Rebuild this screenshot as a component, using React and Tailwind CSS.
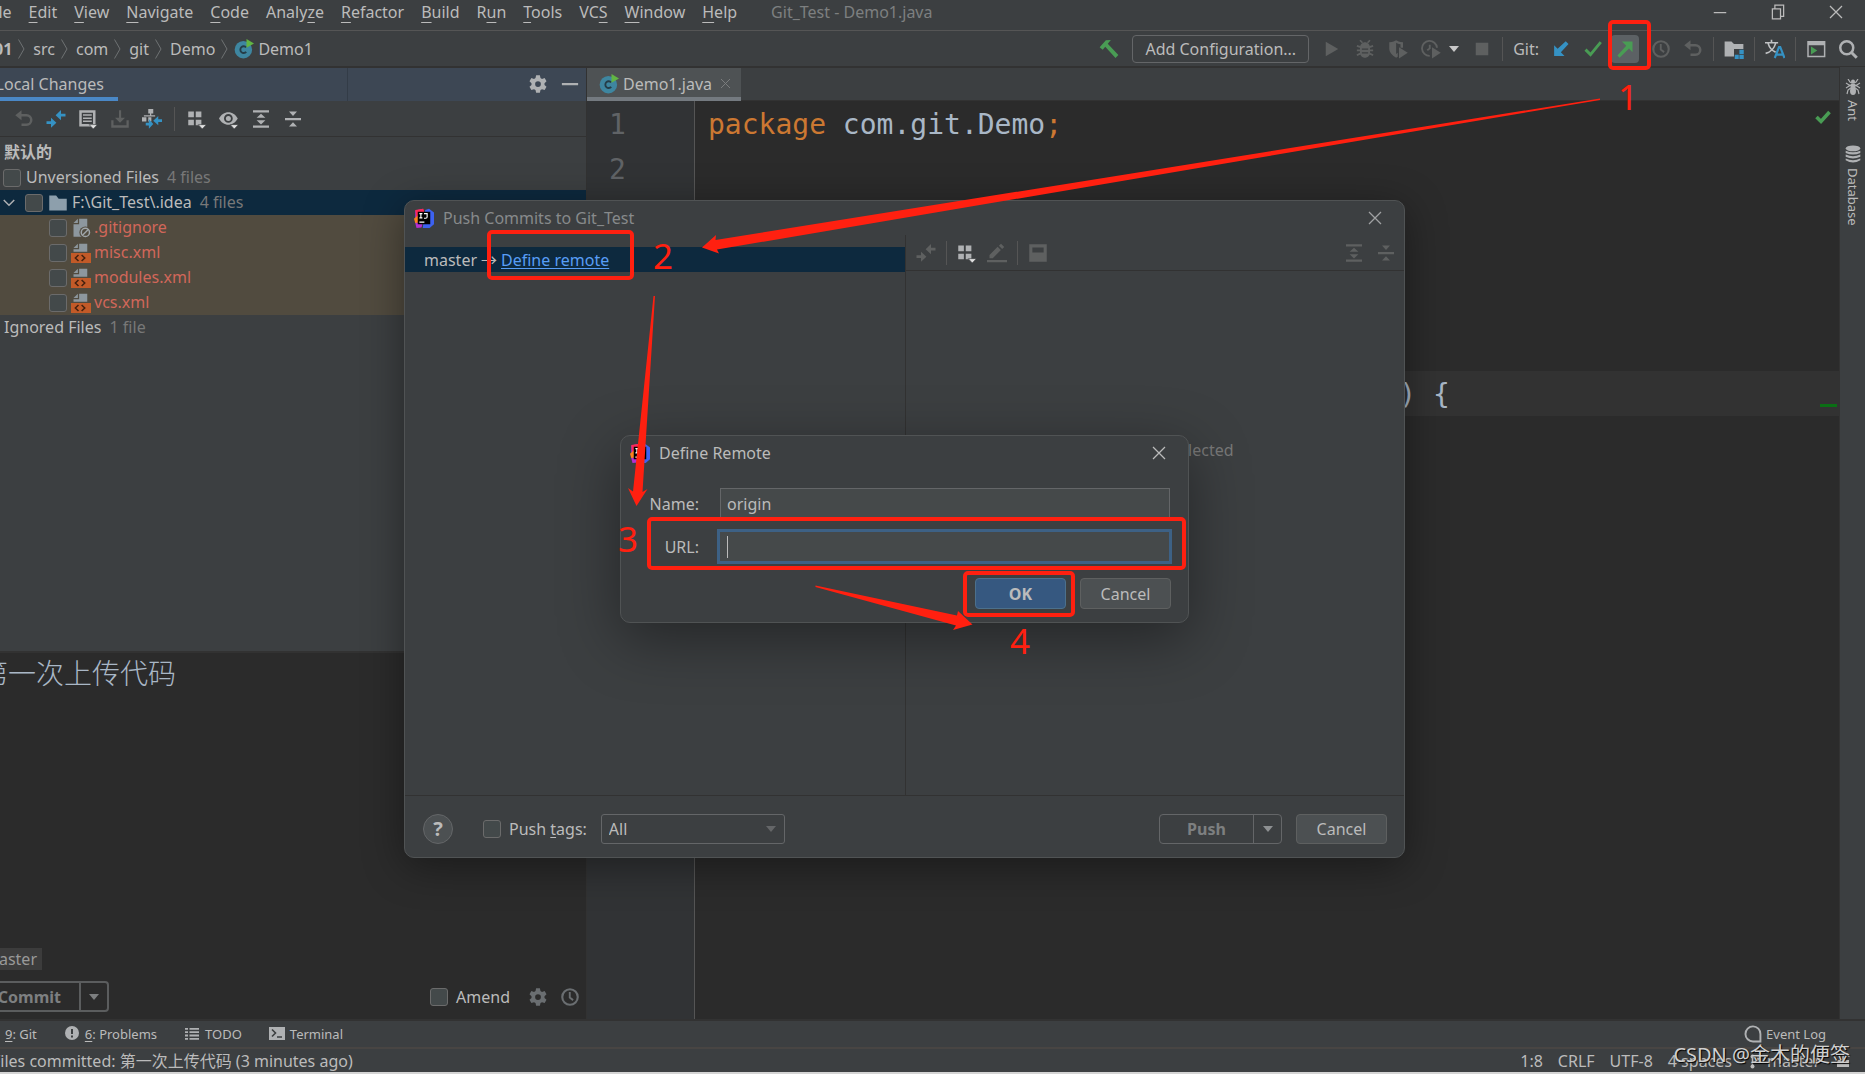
import clsx from 'clsx';

function Icon({ className, size = 'w-5 h-5', children, ...rest }) {
  return (
    <svg
      viewBox="0 0 16 16"
      aria-hidden="true"
      className={clsx('shrink-0', size, className)}
      fill="currentColor"
      {...rest}
    >
      {children}
    </svg>
  );
}

const UndoIcon = () => (
  <Icon>
    <path d="M1 5l5-4v3h4a4.600 4.600 0 0 1 0 9.600H6v-2h4a2.600 2.600 0 0 0 0-5.600H6v3z" />
  </Icon>
);

const DiffIcon = () => (
  <Icon>
    <path d="M7.700 4.900L12 .8v2.900h3.600v2.200H12v3zM8.300 10.900L4 15v-3H.4V9.800H4V6.900z" />
  </Icon>
);

const GridIcon = () => (
  <Icon>
    <path d="M1 2h4.500v4.500H1zM7 2h4.500v4.500H7zM1 8.500h4.500V13H1zM7 8.500h4.500V13H7z" />
    <path d="M9 12.500h6.500L12.200 16z" fill="#e0e0e0" stroke="#3c3f41" strokeWidth=".5" />
  </Icon>
);

const ExpandIcon = () => (
  <Icon>
    <path d="M1.600 1h12.800v1.800H1.600zM1.600 13.200h12.800V15H1.600zM8 3.700l3.500 3.300h-7zM8 12.300L4.500 9h7z" />
  </Icon>
);

const CollapseIcon = () => (
  <Icon>
    <path d="M1.600 7.100h12.800v1.800H1.600zM8 5.500L4.800 2h6.400zM8 10.500l3.200 3.500H4.800z" />
  </Icon>
);

const GearIcon = () => (
  <Icon>
    <path
      fillRule="evenodd"
      d="M6.500 1h3l.5 2.200 1.200.7 2.100-.7 1.500 2.600-1.600 1.500v1.400l1.600 1.500-1.500 2.600-2.100-.7-1.200.7-.5 2.200h-3l-.5-2.200-1.200-.7-2.100.7-1.500-2.600 1.600-1.500V7.300L1.200 5.800l1.500-2.600 2.100.7L6 3.200zM8 5.700a2.300 2.300 0 1 0 0 4.600 2.300 2.300 0 0 0 0-4.600z"
    />
  </Icon>
);

const ClockIcon = () => (
  <Icon>
    <circle cx="8" cy="8" r="6.200" fill="none" stroke="currentColor" strokeWidth="1.700" />
    <path d="M7.800 4v4.500l2.700 2" fill="none" stroke="currentColor" strokeWidth="1.500" />
  </Icon>
);

const CloseIcon = ({ size }) => (
  <Icon size={size}>
    <path d="M3.200 3.200l9.600 9.600M12.800 3.200l-9.600 9.600" stroke="currentColor" strokeWidth="1" />
  </Icon>
);

const ClassIcon = () => (
  <Icon>
    <circle cx="7.500" cy="8.500" r="7" fill="#3e86a0" />
    <path d="M9.800 6.700a2.700 2.700 0 1 0 0 3.600" fill="none" stroke="#253d47" strokeWidth="1.500" />
    <path d="M10 0l6 3.500L10 7z" fill="#62b543" />
  </Icon>
);

const IdeaIcon = () => (
  <Icon>
    <path d="M1 2l6-1.500L8 8l-2 7.500-4 .5-1-4z" fill="#b52fd0" />
    <path d="M1 1.500L7.500.5 9 6 2 8z" fill="#fe2857" />
    <path d="M0 8.500L3 6l1 5.500-3 .5z" fill="#fc801d" />
    <path d="M9 1.500L12 .5l4 3v9.500l-3.500 3H7L8 8z" fill="#3d62f0" />
    <path d="M3 3h10v10H3z" fill="#000" />
    <path d="M4.300 4.500h2.400M5.500 4.500v3.400M4.300 7.900h2.400M8 4.500h2.500v2.700q0 1-1.200 1H8M4.300 11.300h4" fill="none" stroke="#fff" strokeWidth=".9" />
  </Icon>
);

const FileIcon = ({ ignored }) => (
  <Icon>
    <path d="M6.500.5H13V15H2V5h4.500z" fill="#8d979e" />
    <path d="M5.500.5V4H2z" fill="#8d979e" />
    {ignored ? (
      <>
        <circle cx="11.500" cy="11.500" r="4.800" fill="#514b3f" />
        <circle cx="11.500" cy="11.500" r="3.300" fill="none" stroke="#a0a6aa" strokeWidth="1.200" />
        <path d="M9.200 13.800l4.600-4.600" stroke="#a0a6aa" strokeWidth="1.200" />
      </>
    ) : (
      <>
        <path d="M0 7h16v1H0z" fill="#514b3f" />
        <path d="M0 8h16v8H0z" fill="#c25a28" />
        <path d="M6 9.600L3.500 12 6 14.400M8.500 9.600L11 12l-2.500 2.400" fill="none" stroke="#43210f" strokeWidth="1.200" />
      </>
    )}
  </Icon>
);

const Caret = ({ className }) => (
  <svg viewBox="0 0 10 6" aria-hidden="true" className={clsx('w-[10px] h-[6px] shrink-0', className)} fill="currentColor">
    <path d="M0 0h10L5 6z" />
  </svg>
);

const Sep = () => <div className="w-px h-6 bg-[#555555]" />;

function IconButton({ label, className, children }) {
  return (
    <button aria-label={label} className={clsx('shrink-0', className)}>
      {children}
    </button>
  );
}

function Checkbox({ id }) {
  return (
    <input
      type="checkbox"
      id={id}
      className="appearance-none w-[18px] h-[18px] shrink-0 rounded-[3px] border border-[#6b6b6b] bg-[#43494a]"
    />
  );
}

const MENU = [
  ['', 'F', 'ile'],
  ['', 'E', 'dit'],
  ['', 'V', 'iew'],
  ['', 'N', 'avigate'],
  ['', 'C', 'ode'],
  ['Analy', 'z', 'e'],
  ['', 'R', 'efactor'],
  ['', 'B', 'uild'],
  ['R', 'u', 'n'],
  ['', 'T', 'ools'],
  ['VC', 'S', ''],
  ['', 'W', 'indow'],
  ['', 'H', 'elp'],
];

function MenuBar() {
  return (
    <header className="h-[31px] pb-[6px] shrink-0 flex items-center border-b border-[#555555]">
      <nav className="-ml-[14px] flex gap-[17px]">
        {MENU.map(([before, key, after]) => (
          <button key={before + key + after}>
            {before}
            <span className="underline underline-offset-4">{key}</span>
            {after}
          </button>
        ))}
      </nav>
      <span className="ml-[34px] text-[#7d7f80]">Git_Test - Demo1.java</span>
      <div className="ml-auto pr-[19px] flex items-center gap-[38px]">
        <IconButton label="Minimize">
          <Icon>
            <path d="M3 8h10v1H3z" />
          </Icon>
        </IconButton>
        <IconButton label="Restore">
          <Icon>
            <path d="M3.500 5.500h6.500v8H3.500zM5.500 5.500v-3H12.500v9H10" fill="none" stroke="currentColor" />
          </Icon>
        </IconButton>
        <IconButton label="Close">
          <CloseIcon />
        </IconButton>
      </div>
    </header>
  );
}

const Chevron = () => (
  <svg viewBox="0 0 7 20" aria-hidden="true" className="w-[7px] h-5" fill="none" stroke="#6f7274">
    <path d="M.5.500L6 10 .5 19.500" />
  </svg>
);

function Toolbar() {
  return (
    <div className="h-[36px] shrink-0 flex items-center pr-[7px] border-b border-[#323232]">
      <div className="-ml-[6px] flex items-center gap-[6px]">
        <span className="font-bold">01</span>
        {['src', 'com', 'git', 'Demo'].map((part) => (
          <span key={part} className="flex items-center gap-2">
            <Chevron />
            {part}
          </span>
        ))}
        <Chevron />
        <span className="flex items-center gap-1">
          <ClassIcon />
          Demo1
        </span>
      </div>

      <div className="ml-auto flex items-center gap-[10px]">
        <div className="flex items-center gap-[13px] text-[#5e6060]">
          <IconButton label="Build" className="text-[#499c54]">
            <Icon>
              <path d="M.5 6.500L5.500 1 9.500.8 7 3.700 15.500 12.800 13.200 15.200 5 6.200 3 8.600z" />
            </Icon>
          </IconButton>
          <button className="h-7 px-3 rounded-[4px] border border-[#646668] text-[#bbbbbb]">
            Add Configuration...
          </button>
          <IconButton label="Run">
            <Icon>
              <path d="M3 2.200l10 5.800L3 13.800z" />
            </Icon>
          </IconButton>
          <IconButton label="Debug">
            <Icon>
              <path d="M4 1l2 2M12 1l-2 2M1.500 5.500l3 1M14.500 5.500l-3 1M1.500 9h3M14.500 9h-3M1.500 13l3-1.500M14.500 13l-3-1.500" stroke="currentColor" strokeWidth="1.400" />
              <path fillRule="evenodd" d="M8 2.500c2.200 0 4 2 4 4V11c0 2.200-1.800 4-4 4s-4-1.800-4-4V6.500c0-2 1.800-4 4-4zM5.500 7.500v1h5v-1zm0 3v1h5v-1z" />
            </Icon>
          </IconButton>
          <IconButton label="Run with coverage">
            <Icon>
              <path fillRule="evenodd" d="M1 2.500C4 2.500 5.500 1.500 6.500 1c1 .5 2.500 1.500 5.500 1.500V7h-2V4.200C8.500 4 7.500 3.500 6.500 3v9l1.300-1v3.200L6.500 15C3 13 1 10.500 1 8z" />
              <path d="M8.800 6.500l7 4.500-7 4.500z" />
            </Icon>
          </IconButton>
          <div className="flex items-center gap-2">
            <IconButton label="Profile">
              <Icon>
                <path d="M7 13.500A6 6 0 1 1 12.800 7M7 4.500v3L5 9" fill="none" stroke="currentColor" strokeWidth="1.500" />
                <path d="M8.800 6.500l7 4.500-7 4.500z" />
              </Icon>
            </IconButton>
            <Caret className="text-[#c8c8c8]" />
          </div>
          <IconButton label="Stop">
            <Icon>
              <path d="M3 3h10v10H3z" />
            </Icon>
          </IconButton>
        </div>
        <Sep />
        <div className="flex items-center gap-3">
          <span>Git:</span>
          <IconButton label="Update project" className="text-[#3592c4]">
            <Icon>
              <path d="M2.500 13.500V5L5.300 7.700 11.800 1.800 14 4 7.900 10.600l2.900 2.900z" />
            </Icon>
          </IconButton>
          <IconButton label="Commit" className="text-[#499c54]">
            <Icon>
              <path d="M2 8.500l4 4 8.200-10" fill="none" stroke="currentColor" strokeWidth="2.300" />
            </Icon>
          </IconButton>
          <IconButton
            label="Push"
            className="-ml-1 w-7 h-7 flex items-center justify-center rounded-[4px] bg-[#5c6164] text-[#499c54]"
          >
            <Icon>
              <path d="M14 2v8.500L11.200 7.500 3.700 15 1.900 13.200 9 5.300 5.500 2z" />
            </Icon>
          </IconButton>
          <IconButton label="History" className="text-[#5e6060]">
            <ClockIcon />
          </IconButton>
          <IconButton label="Rollback" className="text-[#5e6060]">
            <UndoIcon />
          </IconButton>
        </div>
        <Sep />
        <IconButton label="Project structure" className="text-[#afb1b3]">
          <Icon>
            <path d="M.5 2h5.500l2 2h7.500v4H8v6H.5z" />
            <path d="M12.300 8.500h3.500V12h-3.500zM8.600 12.500h3.200V16H8.600zM12.300 12.500h3.500V16h-3.500z" fill="#3592c4" />
          </Icon>
        </IconButton>
        <Sep />
        <IconButton label="Translate" className="text-[#c0c2c4]">
          <Icon>
            <path d="M0 3h10.500M5.200.5V3M2.500 3.500c1 3.500 3.500 6 6 7M8.500 3.500c-1 3.500-4 7-8 8" fill="none" stroke="currentColor" strokeWidth="1.300" />
            <path d="M7.800 15.200L11.200 6.500h1l3.400 8.700M9 12.500h5.500" fill="none" stroke="#3592c4" strokeWidth="1.700" />
          </Icon>
        </IconButton>
        <Sep />
        <div className="flex items-center gap-3 text-[#afb1b3]">
          <IconButton label="Run anything">
            <Icon>
              <path fillRule="evenodd" d="M1 1.500h14.500v13H1zM2.200 5v8.300h12.100V5z" />
              <path d="M4 6l5 3.200L4 12.400z" fill="#499c54" />
            </Icon>
          </IconButton>
          <IconButton label="Search everywhere">
            <Icon>
              <path d="M11 11l4 4" stroke="currentColor" strokeWidth="2.400" />
              <circle cx="7" cy="7" r="5.200" fill="none" stroke="currentColor" strokeWidth="2" />
            </Icon>
          </IconButton>
        </div>
      </div>
    </div>
  );
}

const FILES = ['.gitignore', 'misc.xml', 'modules.xml', 'vcs.xml'];

function ChangesTree() {
  return (
    <div className="flex-1 min-h-0 pt-[3px] border-t border-[#323232] leading-[25px]">
      <div className="h-[25px] pl-1 font-bold">默认的</div>
      <div className="h-[25px] pl-[3px] flex items-center">
        <Checkbox id="unversioned" />
        <label htmlFor="unversioned" className="ml-[5px]">
          Unversioned Files
        </label>
        <span className="ml-2 text-[#787878]">4 files</span>
      </div>
      <div className="h-[25px] pl-[3px] flex items-center bg-[#0d293e]">
        <Icon size="w-3 h-3" className="mr-[10px]">
          <path d="M1 4l7 7 7-7" fill="none" stroke="#afb1b3" strokeWidth="2" />
        </Icon>
        <Checkbox id="idea" />
        <Icon className="ml-[5px]">
          <path d="M1 2h5.500l2 2.500H15V14H1z" fill="#8d9fac" />
        </Icon>
        <label htmlFor="idea" className="ml-1">
          F:\Git_Test\.idea
        </label>
        <span className="ml-2 text-[#787878]">4 files</span>
      </div>
      {FILES.map((name) => (
        <div key={name} className="h-[25px] pl-[49px] flex items-center bg-[#514b3f]">
          <Checkbox id={name} />
          <span className="ml-1">
            <FileIcon ignored={name === '.gitignore'} />
          </span>
          <label htmlFor={name} className="ml-[3px] text-[#d1675a]">
            {name}
          </label>
        </div>
      ))}
      <div className="h-[25px] pl-1">
        Ignored Files <span className="ml-1 text-[#787878]">1 file</span>
      </div>
    </div>
  );
}

function CommitPanel() {
  return (
    <section className="w-[587px] shrink-0 flex flex-col overflow-hidden border-r border-[#323232]">
      <div className="h-[34px] shrink-0 flex border-t border-[#323232] bg-[#3d4754]">
        <div className="w-[348px] border-r border-[#333c47] flex">
          <div className="w-[118px] pr-[14px] pt-[2px] flex items-center justify-end border-b-4 border-[#4a88c7] whitespace-nowrap">
            Local Changes
          </div>
        </div>
        <div className="ml-auto pr-[6px] pb-[2px] flex items-center gap-3 text-[#afb1b3]">
          <IconButton label="Settings">
            <GearIcon />
          </IconButton>
          <IconButton label="Hide">
            <Icon>
              <path d="M1.500 7.200h13v1.800h-13z" />
            </Icon>
          </IconButton>
        </div>
      </div>

      <div className="h-[35px] shrink-0 pl-[14px] flex items-center gap-3 text-[#afb1b3]">
        <IconButton label="Rollback" className="text-[#5e6060]">
          <UndoIcon />
        </IconButton>
        <IconButton label="Show diff" className="text-[#3592c4]">
          <DiffIcon />
        </IconButton>
        <IconButton label="Changelists">
          <Icon>
            <path fillRule="evenodd" d="M1 1h13v13H1zM3 3v9h9V3z" />
            <path d="M4 4.200h7v1.200H4zM4 6.700h7v1.200H4zM4 9.200h7v1.200H4z" />
            <path d="M9 12.500h6.500L12.200 16z" fill="#e0e0e0" stroke="#3c3f41" strokeWidth=".5" />
          </Icon>
        </IconButton>
        <IconButton label="Shelve" className="text-[#5e6060]">
          <Icon>
            <path d="M7.200 1h1.700v6H12l-4 4-4-4h3.200zM1 9h1.800v4h10.400V9H15v6H1z" />
          </Icon>
        </IconButton>
        <IconButton label="Group by changelist">
          <Icon>
            <path d="M5 0h4v3.500H5zM6.400 3h1v3h-1zM1.500 5h9v1h-9zM0 6.500h3.500V10H0zM5 6.500h2.500V10H5z" />
            <path d="M9 9.300l4-3.800v2.600h3v2.200h-3V13zM9 12l-3.500 3.800v-2.600H3V11h2.500V8z" fill="#3592c4" />
          </Icon>
        </IconButton>
        <Sep />
        <IconButton label="Group by">
          <GridIcon />
        </IconButton>
        <IconButton label="View options">
          <Icon>
            <path fillRule="evenodd" d="M0 7.500C1.500 4.500 4.500 2.500 7.500 2.500s6 2 7.500 5c-1.500 3-4.500 5-7.500 5s-6-2-7.500-5zM7.500 4a3.500 3.500 0 1 0 0 7 3.500 3.500 0 0 0 0-7z" />
            <circle cx="7.500" cy="7.500" r="2" />
            <path d="M9 12.500h6.500L12.200 16z" fill="#e0e0e0" stroke="#3c3f41" strokeWidth=".5" />
          </Icon>
        </IconButton>
        <IconButton label="Expand all">
          <ExpandIcon />
        </IconButton>
        <IconButton label="Collapse all">
          <CollapseIcon />
        </IconButton>
      </div>

      <ChangesTree />

      <div className="h-[368px] shrink-0 flex flex-col bg-[#2b2b2b] border-t-2 border-[#323232]">
        <p className="-ml-5 text-[28px] leading-10 font-light text-[#a9b7c6]">第一次上传代码</p>
        <div className="mt-auto w-[42px] h-[22px] pr-[5px] flex items-center justify-end bg-[#3c3c3c] text-[#999999]">
          master
        </div>
        <div className="mt-[11px] mb-[7px] flex items-center pr-[6px]">
          <div className="-ml-5 w-[129px] h-[31px] flex rounded-[4px] border-2 border-[#5b5d5e] text-[#7d7f80]">
            <button className="flex-1 pr-[18px] text-right font-bold">Commit</button>
            <button aria-label="Commit options" className="w-[28px] flex items-center justify-center border-l-2 border-[#5b5d5e]">
              <Caret />
            </button>
          </div>
          <div className="ml-auto flex items-center">
            <Checkbox id="amend" />
            <label htmlFor="amend" className="ml-2 mr-[18px]">
              Amend
            </label>
            <div className="flex items-center gap-3 text-[#6a6e71]">
              <IconButton label="Commit settings">
                <GearIcon />
              </IconButton>
              <IconButton label="Commit history">
                <ClockIcon />
              </IconButton>
            </div>
          </div>
        </div>
      </div>
    </section>
  );
}

const CODE = [
  <>
    <span className="text-[#cc7832]">package</span> com.git.Demo<span className="text-[#cc7832]">;</span>
  </>,
  null,
  <span className="text-[#629755]">/**</span>,
  <span className="text-[#629755]"> */</span>,
  <>
    <span className="text-[#cc7832]">public class</span> Demo1 {'{'}
  </>,
  null,
  <>
    {'    '}
    <span className="text-[#cc7832]">public static void</span> main(String[] args) {'{'}
  </>,
];

function Editor() {
  return (
    <main className="flex-1 min-w-0 flex flex-col">
      <div className="h-[34px] shrink-0 flex border-t border-[#323232] border-b border-b-[#323232]">
        <div className="w-[154px] -mb-px pl-3 pr-2 pt-[2px] flex items-center bg-[#4e5254] border-b-4 border-[#747a80]">
          <ClassIcon />
          <span className="ml-1">Demo1.java</span>
          <IconButton label="Close tab" className="ml-auto text-[#7d7f80]">
            <CloseIcon size="w-[15px] h-[15px]" />
          </IconButton>
        </div>
      </div>
      <div className="flex-1 min-h-0 relative flex bg-[#2b2b2b] font-['DejaVu_Sans_Mono',monospace] text-[28px] leading-[47px]">
        <div className="w-[108px] shrink-0 pl-[22px] bg-[#313335] border-r border-[#555555] text-[#606366]">
          {CODE.map((_, i) => (
            <div key={i} className="h-[45px]">
              {i + 1}
            </div>
          ))}
        </div>
        <div className="flex-1 min-w-0 text-[#a9b7c6]">
          {CODE.map((line, i) => (
            <div key={i} className={clsx('h-[45px] pl-[13px] whitespace-pre', i === 6 && 'bg-[#323232]')}>
              {line}
            </div>
          ))}
        </div>
        <Icon size="w-4 h-4" className="absolute right-2 top-2 text-[#499c54]">
          <path d="M1.500 8l4.500 4.500L14.500 3" fill="none" stroke="currentColor" strokeWidth="3.600" />
        </Icon>
        <div className="absolute right-[2px] top-[303px] w-[17px] h-[3px] bg-[#0a6e14]" />
      </div>
    </main>
  );
}

function SideStripe() {
  return (
    <aside className="w-[26px] shrink-0 pt-3 flex flex-col items-center border-l border-[#323232] text-[13px] leading-5">
      <button className="flex flex-col items-center gap-[5px]">
        <Icon size="w-4 h-4" className="text-[#afb1b3]">
          <path d="M3 0l2 3 2 1M13 0l-2 3-2 1M1 4l3 2h8l3-2M1 9l3-2h8l3 2M2 15l1-4 4-3M14 15l-1-4-4-3" fill="none" stroke="currentColor" strokeWidth="1.200" />
          <circle cx="8" cy="2.500" r="2" />
          <circle cx="8" cy="6.500" r="2.300" />
          <ellipse cx="8" cy="12" rx="3" ry="4" />
        </Icon>
        <span className="[writing-mode:vertical-rl]">Ant</span>
      </button>
      <button className="mt-6 flex flex-col items-center gap-[5px]">
        <Icon size="w-[18px] h-[18px]" className="text-[#afb1b3]">
          <ellipse cx="8" cy="3" rx="6.500" ry="2.600" />
          <path d="M1.500 5q6.500 3 13 0v2q-6.500 3-13 0zM1.500 8.500q6.500 3 13 0v2q-6.500 3-13 0zM1.500 12q6.500 3 13 0v1.500q-6.500 4-13 0z" />
        </Icon>
        <span className="[writing-mode:vertical-rl]">Database</span>
      </button>
    </aside>
  );
}

function BottomBars() {
  return (
    <footer className="shrink-0">
      <div className="h-[28px] pl-[5px] flex items-center gap-[27px] border-t-2 border-[#323232] text-[13px]">
        <button>
          <span className="underline underline-offset-2">9</span>: Git
        </button>
        <button className="flex items-center gap-[5px]">
          <Icon size="w-4 h-4" className="text-[#afb1b3]">
            <circle cx="8" cy="7" r="7" />
            <path d="M7 3h2v5H7zM7 9.500h2v2H7z" fill="#3c3f41" />
          </Icon>
          <span>
            <span className="underline underline-offset-2">6</span>: Problems
          </span>
        </button>
        <button className="flex items-center gap-[5px]">
          <Icon size="w-4 h-4" className="text-[#afb1b3]">
            <path d="M1 2h3v1.800H1zM5.500 2H15v1.800H5.500zM1 5.300h3v1.800H1zM5.500 5.300H15v1.800H5.500zM1 8.600h3v1.800H1zM5.500 8.600H15v1.800H5.500zM1 11.900h3v1.800H1zM5.500 11.900H15v1.800H5.500z" />
          </Icon>
          TODO
        </button>
        <button className="flex items-center gap-[5px]">
          <Icon size="w-4 h-4" className="text-[#afb1b3]">
            <path d="M0 1h16v13H0z" />
            <path d="M3 3.500L6.500 7 3 10.500M8 11h5" fill="none" stroke="#3c3f41" strokeWidth="1.600" />
          </Icon>
          Terminal
        </button>
        <button className="ml-auto mr-[39px] flex items-center gap-1">
          <Icon size="w-[18px] h-[18px]" className="text-[#afb1b3]">
            <path d="M8 1.200A6.600 6.600 0 0 0 8 14.600h6.600V8A6.600 6.600 0 0 0 8 1.200z" fill="none" stroke="currentColor" strokeWidth="1.700" />
          </Icon>
          Event Log
        </button>
      </div>
      <div className="h-[27px] flex items-center border-t-2 border-[#484543] border-b-2 border-b-[#d4d4d4]">
        <span className="-ml-2">Files committed: 第一次上传代码 (3 minutes ago)</span>
        <div className="ml-auto pr-[14px] flex items-center gap-[15px]">
          <span>1:8</span>
          <span>CRLF</span>
          <span>UTF-8</span>
          <span>4 spaces</span>
          <span className="flex items-center gap-1">
            <Icon size="w-4 h-4">
              <circle cx="5.500" cy="3.500" r="2" />
              <circle cx="5.500" cy="13.500" r="2" />
              <circle cx="11.500" cy="4.500" r="2" />
              <path d="M5.500 3.500v9M11.500 4.500q0 4-6 5" fill="none" stroke="currentColor" strokeWidth="1.500" />
            </Icon>
            master
          </span>
          <Icon size="w-4 h-4">
            <path d="M2 7h12v7H2z" />
            <path d="M8 7V4a3 3 0 0 1 6 0" fill="none" stroke="currentColor" strokeWidth="1.600" />
          </Icon>
        </div>
      </div>
    </footer>
  );
}

function PushDialog() {
  return (
    <div
      role="dialog"
      aria-label="Push Commits to Git_Test"
      className="absolute left-[404px] top-[200px] w-[1001px] h-[658px] flex flex-col rounded-[10px] border border-[#505354] bg-[#3c3f41] shadow-[0_8px_40px_rgba(0,0,0,0.4)]"
    >
      <div className="h-[34px] shrink-0 pl-[9px] pr-[19px] flex items-center">
        <IdeaIcon />
        <span className="ml-[9px] text-[#878a8b]">Push Commits to Git_Test</span>
        <IconButton label="Close" className="ml-auto text-[#a0a2a3]">
          <CloseIcon />
        </IconButton>
      </div>
      <div className="flex-1 min-h-0 flex border-b border-[#323232]">
        <div className="w-[500px] shrink-0 pt-3">
          <div className="h-[25px] pl-[19px] flex items-center gap-1 bg-[#0d293e]">
            <span>master</span>
            <span>→</span>
            <a href="#define-remote" className="text-[#589df6] underline underline-offset-2">
              Define remote
            </a>
          </div>
        </div>
        <div className="flex-1 flex flex-col border-l border-[#323232]">
          <div className="h-[36px] pl-[10px] pr-2 flex items-center gap-[10px] border-b border-[#323232] text-[#5e6060]">
            <IconButton label="Show diff">
              <DiffIcon />
            </IconButton>
            <Sep />
            <IconButton label="Group by" className="text-[#afb1b3]">
              <GridIcon />
            </IconButton>
            <IconButton label="Edit source">
              <Icon>
                <path d="M0 13.500h16v1.800H0zM2 12.200V9.500l6.500-6.500 2.600 2.600L4.600 12.200zM9.500 2.200L11.200.5l2.600 2.600-1.700 1.700z" />
              </Icon>
            </IconButton>
            <Sep />
            <IconButton label="Preview">
              <Icon>
                <path fillRule="evenodd" d="M1 1h14v14H1zM3.500 3.500v4h9v-4z" />
              </Icon>
            </IconButton>
            <div className="ml-auto flex gap-3">
              <IconButton label="Expand all">
                <ExpandIcon />
              </IconButton>
              <IconButton label="Collapse all">
                <CollapseIcon />
              </IconButton>
            </div>
          </div>
          <p className="pt-[167px] text-center text-[#787878]">No commits selected</p>
        </div>
      </div>
      <div className="h-[61px] shrink-0 pl-[18px] pr-[17px] pt-1 flex items-center">
        <button
          aria-label="Help"
          className="w-[30px] h-[30px] rounded-full border border-[#646668] bg-[#4c5052] font-bold text-xl leading-7"
        >
          ?
        </button>
        <span className="ml-[30px] flex">
          <Checkbox id="push-tags" />
        </span>
        <label htmlFor="push-tags" className="ml-2">
          Push <span className="underline underline-offset-2">t</span>ags:
        </label>
        <div className="ml-[14px] relative">
          <select
            aria-label="Tags to push"
            className="appearance-none w-[184px] h-[30px] pl-[7px] rounded-[3px] border border-[#646668] bg-[#3c3f41]"
          >
            <option>All</option>
          </select>
          <Caret className="absolute right-[9px] top-3 text-[#646668]" />
        </div>
        <div className="ml-auto w-[123px] h-[30px] flex rounded-[4px] border border-[#646668] text-[#7d7f80]">
          <button className="flex-1 font-bold">Push</button>
          <button aria-label="Push options" className="w-[28px] flex items-center justify-center border-l border-[#646668] text-[#8d9092]">
            <Caret />
          </button>
        </div>
        <button className="ml-[14px] w-[91px] h-[30px] rounded-[4px] border border-[#5e6060] bg-[#4c5052]">
          Cancel
        </button>
      </div>
    </div>
  );
}

function DefineRemoteDialog() {
  return (
    <div
      role="dialog"
      aria-label="Define Remote"
      id="define-remote"
      className="absolute left-[620px] top-[435px] w-[569px] h-[188px] flex flex-col rounded-[10px] border border-[#505354] bg-[#3c3f41] shadow-[0_16px_60px_rgba(0,0,0,0.4)]"
    >
      <div className="h-[34px] shrink-0 pl-[9px] pr-[19px] flex items-center">
        <IdeaIcon />
        <span className="ml-[9px]">Define Remote</span>
        <IconButton label="Close" className="ml-auto">
          <CloseIcon />
        </IconButton>
      </div>
      <div className="mt-[18px] px-4 grid grid-cols-[62px_1fr] items-center gap-y-[9px]">
        <label htmlFor="remote-name" className="justify-self-end">
          Name:
        </label>
        <input
          id="remote-name"
          defaultValue="origin"
          className="ml-[21px] mr-[2px] h-8 px-[6px] border border-[#646668] bg-[#45494a]"
        />
        <label htmlFor="remote-url" className="justify-self-end">
          URL:
        </label>
        <div className="ml-[18px] h-[35px] flex items-center border-[3px] border-[#3d6185] bg-[#45494a]">
          <span className="ml-[7px] w-px h-[22px] bg-[#bbbbbb]" />
          <input id="remote-url" className="flex-1 h-full bg-transparent outline-none" />
        </div>
      </div>
      <div className="mt-auto mb-[13px] pr-[17px] flex justify-end gap-[14px]">
        <button className="w-[91px] h-[31px] rounded-[4px] border border-[#4c708c] bg-[#365880] font-bold">OK</button>
        <button className="w-[91px] h-[31px] rounded-[4px] border border-[#5e6060] bg-[#4c5052]">Cancel</button>
      </div>
    </div>
  );
}

const MARK = 'absolute border-4 border-[#ff2010] rounded-[5px]';
const STEP = 'absolute text-[35px] leading-9 text-[#ff2010]';

// Step-by-step marks drawn over the whole window
function Annotations() {
  return (
    <div className="absolute inset-0 pointer-events-none">
      <svg viewBox="0 0 1865 1074" width="1865" height="1074" className="absolute left-0 top-0 max-w-none" fill="#ff2010" aria-hidden="true">
        <path d="M1600 98.500L715.500 240l.5-5L702 247.500l17 6-2-4L1600 100z" />
        <path d="M653.500 296L633 491.500 628 488l8.500 18 11-17-5 3 12.500-196z" />
        <path d="M815.500 585.500L957 615.500l1-4.500 14.500 13.500L953 630l3-4.500L815.500 587z" />
      </svg>
      <div className={clsx(MARK, 'left-[1608px] top-[20px] w-[43px] h-[50px]')} />
      <div className={clsx(MARK, 'left-[487px] top-[230px] w-[147px] h-[50px]')} />
      <div className={clsx(MARK, 'left-[647px] top-[517px] w-[539px] h-[53px]')} />
      <div className={clsx(MARK, 'left-[963px] top-[571px] w-[112px] h-[46px]')} />
      <span className={clsx(STEP, 'left-[1618px] top-[79px]')}>1</span>
      <span className={clsx(STEP, 'left-[653px] top-[238px]')}>2</span>
      <span className={clsx(STEP, 'left-[618px] top-[521px]')}>3</span>
      <span className={clsx(STEP, 'left-[1010px] top-[623px]')}>4</span>
      <span className="absolute right-[15px] bottom-[5px] text-xl leading-7 text-[#d0d0d0] [text-shadow:1px_1px_1px_#000]">
        CSDN @金木的便签
      </span>
    </div>
  );
}

export default function App() {
  return (
    <div className="relative h-screen flex flex-col overflow-hidden bg-[#3c3f41] text-[#bbbbbb] text-base leading-6 font-['Noto_Sans','Noto_Sans_CJK_SC',sans-serif]">
      <MenuBar />
      <Toolbar />
      <div className="flex-1 min-h-0 flex">
        <CommitPanel />
        <Editor />
        <SideStripe />
      </div>
      <BottomBars />
      <PushDialog />
      <DefineRemoteDialog />
      <Annotations />
    </div>
  );
}
